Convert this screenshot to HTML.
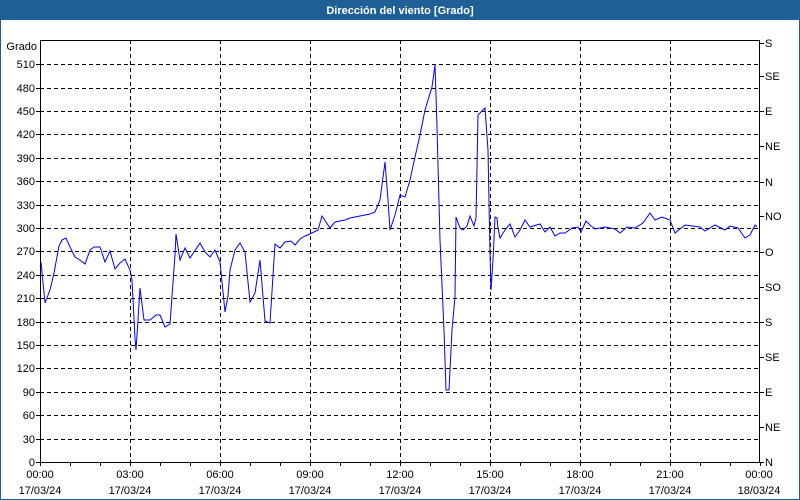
<!DOCTYPE html>
<html><head><meta charset="utf-8"><style>
html,body{margin:0;padding:0;background:#fff}
svg{display:block;font-family:"Liberation Sans",sans-serif;font-size:11px}
</style></head><body>
<svg width="800" height="500" viewBox="0 0 800 500" xmlns="http://www.w3.org/2000/svg">
<rect x="0" y="0" width="800" height="500" fill="#fff"/>
<rect x="0.5" y="0.5" width="799" height="499" fill="none" stroke="#1e5f96"/>
<rect x="0" y="0" width="800" height="20" fill="#1e5f96"/>
<text x="400" y="14" fill="#fff" font-weight="bold" font-size="11" text-anchor="middle">Dirección del viento [Grado]</text>
<g stroke="#000" stroke-dasharray="4,3" stroke-width="1">
<path d="M40 439.5H760M40 415.5H760M40 392.5H760M40 368.5H760M40 345.5H760M40 322.5H760M40 298.5H760M40 275.5H760M40 251.5H760M40 228.5H760M40 205.5H760M40 181.5H760M40 158.5H760M40 134.5H760M40 111.5H760M40 88.5H760M40 64.5H760"/>
<path d="M130.5 40V462M220.5 40V462M310.5 40V462M400.5 40V462M490.5 40V462M580.5 40V462M670.5 40V462"/>
</g>
<rect x="40.5" y="40.5" width="719" height="422" fill="none" stroke="#000"/>
<g stroke="#000">
<path d="M70.5 462v4M100.5 462v4M130.5 462v4M160.5 462v4M190.5 462v4M220.5 462v4M250.5 462v4M280.5 462v4M310.5 462v4M340.5 462v4M370.5 462v4M400.5 462v4M430.5 462v4M460.5 462v4M490.5 462v4M520.5 462v4M550.5 462v4M580.5 462v4M610.5 462v4M640.5 462v4M670.5 462v4M700.5 462v4M730.5 462v4M760.5 462v4M40.5 462v4"/>
<path d="M760 43.5h4M760 76.5h4M760 111.5h4M760 146.5h4M760 182.5h4M760 216.5h4M760 252.5h4M760 287.5h4M760 322.5h4M760 357.5h4M760 392.5h4M760 427.5h4M760 462.5h4"/>
<path d="M36 462.5h4M36 439.5h4M36 415.5h4M36 392.5h4M36 368.5h4M36 345.5h4M36 322.5h4M36 298.5h4M36 275.5h4M36 251.5h4M36 228.5h4M36 205.5h4M36 181.5h4M36 158.5h4M36 134.5h4M36 111.5h4M36 88.5h4M36 64.5h4"/>
</g>
<g fill="#000" text-anchor="end">
<text x="37" y="50">Grado</text>
<text x="35" y="466">0</text><text x="35" y="443">30</text><text x="35" y="419">60</text><text x="35" y="396">90</text><text x="35" y="372">120</text><text x="35" y="349">150</text><text x="35" y="326">180</text><text x="35" y="302">210</text><text x="35" y="279">240</text><text x="35" y="255">270</text><text x="35" y="232">300</text><text x="35" y="209">330</text><text x="35" y="185">360</text><text x="35" y="162">390</text><text x="35" y="138">420</text><text x="35" y="115">450</text><text x="35" y="92">480</text><text x="35" y="68">510</text>
</g>
<g fill="#000">
<text x="765" y="47">S</text><text x="765" y="80">SE</text><text x="765" y="115">E</text><text x="765" y="150">NE</text><text x="765" y="186">N</text><text x="765" y="220">NO</text><text x="765" y="256">O</text><text x="765" y="291">SO</text><text x="765" y="326">S</text><text x="765" y="361">SE</text><text x="765" y="396">E</text><text x="765" y="431">NE</text><text x="765" y="466">N</text>
</g>
<g fill="#000" text-anchor="middle">
<text x="40" y="478">00:00</text><text x="40" y="494">17/03/24</text>
<text x="130" y="478">03:00</text><text x="130" y="494">17/03/24</text>
<text x="220" y="478">06:00</text><text x="220" y="494">17/03/24</text>
<text x="310" y="478">09:00</text><text x="310" y="494">17/03/24</text>
<text x="400" y="478">12:00</text><text x="400" y="494">17/03/24</text>
<text x="490" y="478">15:00</text><text x="490" y="494">17/03/24</text>
<text x="580" y="478">18:00</text><text x="580" y="494">17/03/24</text>
<text x="670" y="478">21:00</text><text x="670" y="494">17/03/24</text>
<text x="759" y="478">00:00</text><text x="759" y="494">18/03/24</text>
</g>
<polyline fill="none" stroke="#0000ff" stroke-width="1" points="41,262 45,303 50,290 54,273 59,246 62,240 66,238 70,247 75,257 80,260 85,264 90,250 94,247 100,247 105,262 110,251 115,269 120,263 125,259 130,270 132,280 135,338 136,350 138,320 140,288 144,320 150,320 156,315 160,315 165,327 170,324 175,255 176,234 180,260 185,248 190,258 200,243 205,252 210,257 215,250 220,262 225,312 228,296 230,270 235,250 240,243 245,252 250,302 255,293 260,260 265,321 270,323 275,244 280,248 285,242 291,241 295,245 300,239 305,236 310,234 318,230 322,216 330,228 335,222 345,220 350,218 360,216 370,214 375,212 380,200 385,162 388,200 390,230 395,215 400,195 405,197 410,180 415,157 420,135 425,110 432,87 435,65 437,127 440,240 444,330 446,390 449,390 452,330 455,297 456,217 460,228 463,230 467,226 470,216 474,226 476,218 478,115 485,108 488,150 490,253 491,290 493,260 495,217 497,218 498,228 500,238 505,230 510,224 515,237 520,230 525,220 530,227 540,224 545,232 550,227 555,236 560,233 565,233 572,228 578,227 581,232 586,221 590,225 595,229 605,227 615,229 620,233 627,227 635,228 643,223 650,213 655,220 662,217 670,220 675,233 685,225 700,227 705,231 715,225 725,230 730,226 738,228 745,238 750,235 755,225 757,227"/>
</svg>
</body></html>
